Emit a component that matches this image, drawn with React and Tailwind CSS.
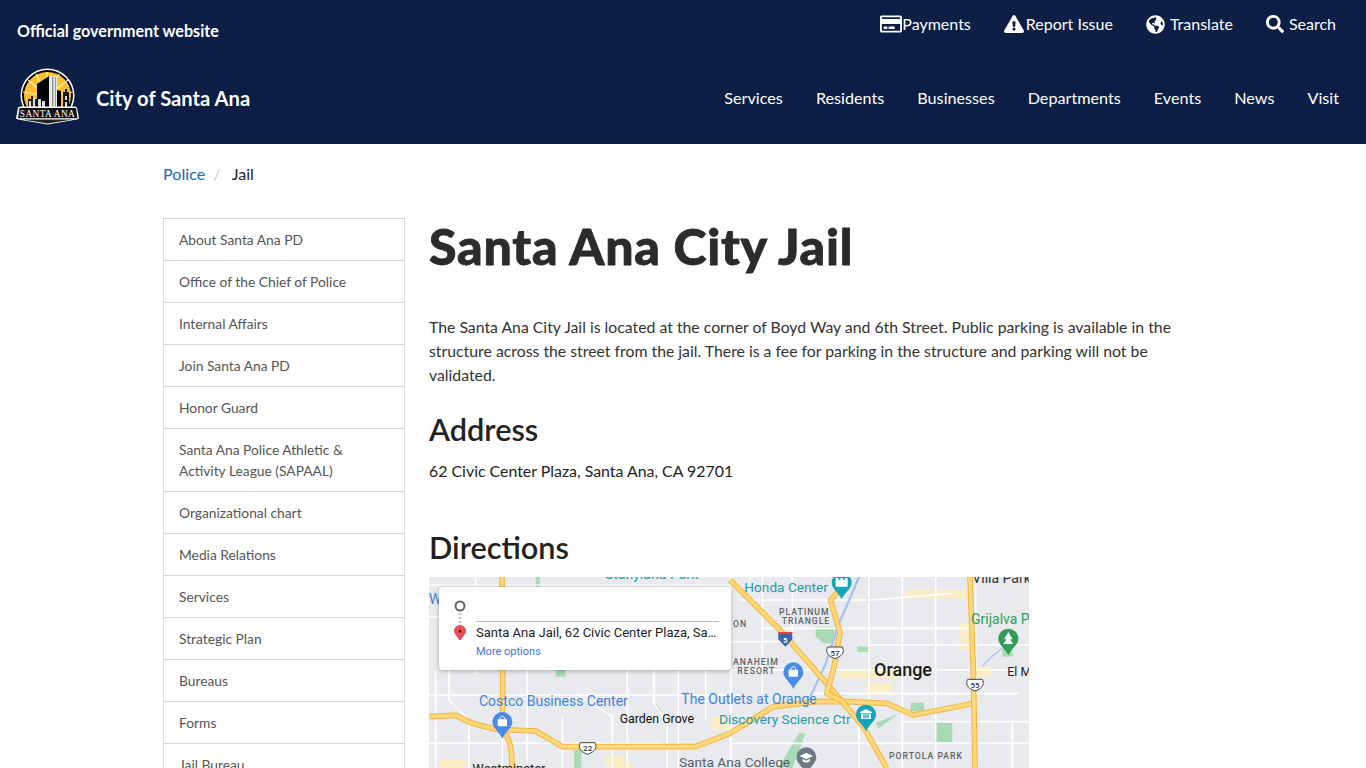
import { FaRegCreditCard, FaExclamationTriangle, FaGlobeAmericas, FaSearch } from 'react-icons/fa';

const topLinks = [
  { label: 'Payments', icon: FaRegCreditCard, size: 22, gap: 'gap-0' },
  { label: 'Report Issue', icon: FaExclamationTriangle, size: 20, gap: 'gap-[2px]' },
  { label: 'Translate', icon: FaGlobeAmericas, size: 19, gap: 'gap-[5px]' },
  { label: 'Search', icon: FaSearch, size: 18, gap: 'gap-[5px]' },
];

const mainLinks = ['Services', 'Residents', 'Businesses', 'Departments', 'Events', 'News', 'Visit'];

const sideLinks = [
  'About Santa Ana PD',
  'Office of the Chief of Police',
  'Internal Affairs',
  'Join Santa Ana PD',
  'Honor Guard',
  'Santa Ana Police Athletic & Activity League (SAPAAL)',
  'Organizational chart',
  'Media Relations',
  'Services',
  'Strategic Plan',
  'Bureaus',
  'Forms',
  'Jail Bureau',
];

const Logo = () => (
  <svg width="64" height="58" viewBox="0 0 64 58" className="shrink-0">
    <circle cx="31.500" cy="27.500" r="27" fill="#fff" />
    <circle cx="31.500" cy="27.500" r="25.500" fill="#000" />
    <circle cx="31.500" cy="27.500" r="23.500" fill="#fdc12e" />
    <g stroke="#fff3c4" strokeWidth="1.200">
      <path d="M31 28L12 12M31 28L7 24M31 28L20 6M31 28L43 6M31 28L52 12M31 28L57 24M31 28L31 4" />
    </g>
    <path d="M21 40V16l12-8v32z" fill="#000" />
    <path d="M33 8h8v32h-8z" fill="#e8e8e8" />
    <path d="M36 9h1.500v31H36zM39 9h1v31h-1z" fill="#999" />
    <path d="M41 22l4 1v17h-4z" fill="#000" />
    <path d="M47 40V24h2v-3h2v3h2v16z" fill="#111" />
    <path d="M12 40v-9h3v-3h2v3h4v9z" fill="#222" />
    <path d="M13 33h2v7h-2zM17 30h2v10h-2zM22 31h3v9h-3zM26 33h3v7h-3zM49 28h2v4h-2zM49 34h2v6h-2z" fill="#ddd" />
    <path d="M2 39.500l2-1h55l2 1 2 11-2 1-29.500 5-29.500-5-2-1z" fill="#fff" />
    <path d="M3.500 40h56.500l1.500 10.200H2z" fill="#111" />
    <path d="M6 51.500h51l-25.500 4z" fill="#222" />
    <text x="31.500" y="49" textAnchor="middle" fontFamily="'Liberation Serif', serif" fontSize="9.300" letterSpacing="0.400" fill="#fff">SANTA ANA</text>
  </svg>
);

const Pin = ({ x, y, color, children }) => (
  <g transform={`translate(${x} ${y})`}>
    <path d="M-30 0a30 30 0 1 1 60 0c0 18-20 28-30 50-10-22-30-32-30-50z" fill={color} />
    {children}
  </g>
);

const Shield = ({ x, y, label }) => (
  <g transform={`translate(${x} ${y})`}>
    <path d="M-22-17h44c6 12 4 26-22 35-26-9-28-23-22-35z" fill="#fff" stroke="#444" strokeWidth="3" />
    <text y="9" textAnchor="middle" fontSize="24" fill="#333" fontWeight="500">{label}</text>
  </g>
);

const Highway = ({ d }) => (
  <>
    <path d={d} fill="none" stroke="#f2b544" strokeWidth="17" strokeLinejoin="round" />
    <path d={d} fill="none" stroke="#fdd878" strokeWidth="11" strokeLinejoin="round" />
  </>
);

const bagIcon = (
  <>
    <path d="M-14-8h28v18a3 3 0 0 1-3 3h-22a3 3 0 0 1-3-3z" fill="#fff" />
    <path d="M-7-8c0-12 14-12 14 0" fill="none" stroke="#fff" strokeWidth="3" />
  </>
);

const museumIcon = (
  <>
    <path d="M0-17l18 9v3h-36v-3z" fill="#fff" />
    <path d="M-15-3h30v16h-30z" fill="#fff" />
    <path d="M-8-1h4v12h-4zM-2-1h4v12h-4zM4-1h4v12h-4z" fill="#14a6b8" />
  </>
);

// street map, drawn at 3x so the coordinates come straight from the crops
const MapDrawing = () => (
  <svg width="600" height="191" viewBox="0 21 1800 573" className="block" fontFamily="Roboto, sans-serif">
    <rect x="0" y="21" width="1800" height="573" fill="#e8eaed" />
    <g fill="#fbeec6">
      <path d="M30 570h80v24H30zM525 555h50l45 39h-85zM850 440h50v40h-50zM1230 300h180v25h-180zM1430 60h190v25h-190zM1590 160h30v80h-30zM1310 340h80v35h-80zM1620 290h70v30h-70z" />
    </g>
    <g fill="#a8dab5">
      <path d="M435 540h22v54h-22zM380 300h30v20h-30zM1160 170h55v50h-30l-25-20zM1285 230h35v16h-35zM1518 458h52v58h-52zM1445 398h40v25h-40zM1720 210h30v50h-30zM680 400l20 25-15 0z" />
      <path d="M1050 590l60-100 20 0-40 104zM1340 460l70-30-60 45z" />
      <path d="M320 21h12v30h-12z" />
    </g>
    <g fill="none" stroke="#fff" strokeWidth="5">
      <path d="M0 45h920M0 140h420M0 375h930M0 520h700M60 290v100l60 60v144M20 300v294M140 21v294M220 21v590M295 300v294M400 440v154M440 370l110 70v154M595 300v294M675 300v100l40 60v134M748 300v294M830 300v150M905 21v573" />
      <path d="M930 90h400l240-20M1000 175h620M1320 225h500M1120 300h700M1150 370h620M1320 21v390M1420 21v573M1520 21v573M1640 21v573M900 520h900M1170 450h120v144M1750 450v144M1420 455h380" />
      <path d="M905 215h160M905 300h200M1000 21v350M1090 21v180" />
    </g>
    <path d="M1290 21l-60 140-40 120-60 130" fill="none" stroke="#a6c3f2" strokeWidth="7" />
    <path d="M1660 290c30-40 70-60 110-90" fill="none" stroke="#a6c3f2" strokeWidth="4" />
    <Highway d="M219 21v30M221 300v130" />
    <Highway d="M0 440L80 436L130 460L200 478L320 483L400 530L800 530L903 490L1033 410L1163 395L1253 395L1373 400L1453 435L1583 410L1633 400" />
    <Highway d="M903 30L1053 180L1193 340L1303 470L1373 594" />
    <Highway d="M1240 50L1205 90L1233 190L1213 300L1193 370L1243 395" />
    <Highway d="M1623 21L1633 300L1638 594" />
    <Highway d="M229 490c12 18 20 40 20 104" />
    <g fontSize="42">
      <text x="150" y="408" fill="#4285d6">Costco Business Center</text>
      <text x="757" y="403" fill="#4285d6">The Outlets at Orange</text>
      <text x="870" y="462" fill="#1f9aa8" fontSize="41">Discovery Science Ctr</text>
      <text x="528" y="26" fill="#1f9aa8">Stanyland Park</text>
      <text x="946" y="65" fill="#1f9aa8" fontSize="41">Honda Center</text>
      <text x="0" y="102" fill="#4285d6">W</text>
      <text x="1626" y="162" fill="#2e9e5b">Grijalva P</text>
      <text x="1630" y="40" fill="#333">Villa Park</text>
      <text x="750" y="590" fill="#55606b" fontSize="41">Santa Ana College</text>
      <text x="572" y="458" fill="#111" fontSize="37">Garden Grove</text>
      <text x="1735" y="318" fill="#222" fontSize="37">El M</text>
      <text x="130" y="608" fill="#222" fontSize="39">Westminster</text>
      <text x="1335" y="317" fill="#1a1a1a" fontSize="54" fontWeight="500">Orange</text>
    </g>
    <g fontSize="26" fill="#5f6368" letterSpacing="3" fontWeight="500">
      <text x="1050" y="134">PLATINUM</text>
      <text x="1058" y="162">TRIANGLE</text>
      <text x="912" y="170">ON</text>
      <text x="912" y="285">ANAHEIM</text>
      <text x="925" y="312">RESORT</text>
      <text x="1380" y="566">PORTOLA PARK</text>
    </g>
    <Pin x={220} y={456} color="#4a8ae8">{bagIcon}</Pin>
    <Pin x={1093} y={307} color="#4a8ae8">{bagIcon}</Pin>
    <Pin x={1238} y={38} color="#14a6b8">
      <path d="M-18-14h8v5h6v-5h8v5h6v-5h8v26h-36z" fill="#fff" />
    </Pin>
    <Pin x={1311} y={434} color="#14a6b8">{museumIcon}</Pin>
    <Pin x={1738} y={206} color="#2f9e58">
      <path d="M0-20l13 22h-8l10 14h-30l10-14h-8z" fill="#fff" />
    </Pin>
    <Pin x={1132} y={562} color="#6d7a85">
      <path d="M-20-4l20-10 20 10-20 10z" fill="#fff" />
      <path d="M-11 4v8c6 5 16 5 22 0v-8l-11 6z" fill="#fff" />
    </Pin>
    <path d="M1048 190h42v18l-21 22-21-22z" fill="#3a65ab" />
    <path d="M1048 186h42v6h-42z" fill="#d94a3d" />
    <text x="1069" y="218" textAnchor="middle" fontSize="22" fill="#fff" fontWeight="700">5</text>
    <Shield x={1218} y={248} label="57" />
    <Shield x={1638} y={345} label="55" />
    <Shield x={476} y={535} label="22" />
  </svg>
);

export default function App() {
  return (
    <div className="h-[768px] overflow-hidden bg-white font-[Lato,sans-serif] text-base text-[#212529]">
      <header className="h-36 bg-[#0c1e45] text-white">
        <div className="flex h-[61px] items-start justify-between pl-[17px] pr-[30px]">
          <div className="pt-[21px] text-[16.100px] leading-5 font-bold">Official government website</div>
          <div className="flex gap-[33px] pt-[14px]">
            {topLinks.map(({ label, icon: Icon, size, gap }) => (
              <a key={label} className={`flex h-5 items-center ${gap}`}>
                <Icon size={size} />
                <span>{label}</span>
              </a>
            ))}
          </div>
        </div>
        <div className="flex h-[72px] items-center justify-between pl-[16px] pr-[27px]">
          <div className="flex items-center gap-4">
            <Logo />
            <span className="relative top-px text-[20.200px] font-bold">City of Santa Ana</span>
          </div>
          <nav className="relative top-px flex gap-[33px] text-[16.200px]">
            {mainLinks.map((link) => (
              <a key={link}>{link}</a>
            ))}
          </nav>
        </div>
      </header>

      <div className="ml-[163px] flex h-[74px] items-start pt-[18px] text-[16.200px] leading-6">
        <a className="text-[#1a6bb0]">Police</a>
        <span className="mx-2 text-[#c8ccd0]">/</span>
        <span className="ml-[3px] text-[#212529]">Jail</span>
      </div>

      <div className="ml-[163px] flex gap-6">
        <aside className="w-[242px] shrink-0 self-start border border-[#d9d9d9]">
          {sideLinks.map((link, i) => (
            <a
              key={link}
              className={`block px-[15px] py-2.5 text-[13.800px] leading-[21px] text-[#555] ${i > 0 ? 'border-t border-[#d9d9d9]' : ''}`}
            >
              {link}
            </a>
          ))}
        </aside>

        <main className="w-[774px]">
          <h1 className="-mt-px text-[50px] leading-[58px] font-black tracking-[0.8px] text-[#2b2b2b] [-webkit-text-stroke:0.8px_#2b2b2b]">Santa Ana City Jail</h1>
          <p className="mt-[40px] text-[15.800px] leading-6 text-[#333]">
            The Santa Ana City Jail is located at the corner of Boyd Way and 6th Street. Public parking is available in the structure across the street from the jail. There is a fee for parking in the structure and parking will not be validated.
          </p>
          <h2 className="mt-[25px] text-[30.700px] leading-9 font-semibold text-[#222]">Address</h2>
          <p className="mt-[11px] text-[15.900px] leading-6 text-[#222]">62 Civic Center Plaza, Santa Ana, CA 92701</p>
          <h2 className="mt-[47px] text-[30.700px] leading-9 font-semibold text-[#222]">Directions</h2>
          <div className="relative mt-[11px] w-[600px]">
            <MapDrawing />
            <div className="absolute top-2.5 left-2.5 h-[83px] w-[292px] rounded-sm bg-white shadow-[0_1px_4px_rgba(0,0,0,0.3)]">
              <svg width="20" height="44" viewBox="0 0 20 44" className="absolute top-[9px] left-[11px]">
                <circle cx="10" cy="10" r="4.500" fill="none" stroke="#5f6368" strokeWidth="2" />
                <path d="M10 17v10" stroke="#c4c7cc" strokeWidth="3" strokeDasharray="2 2" />
                <path d="M10 29a6 6 0 0 1 6 6c0 3-4 6-6 11-2-5-6-8-6-11a6 6 0 0 1 6-6z" fill="#ea4c55" />
                <circle cx="10" cy="35" r="1.500" fill="#7a1a20" />
              </svg>
              <div className="absolute top-[34px] right-3 left-[37px] border-t border-[#bdbdbd]" />
              <div className="absolute top-[36px] left-[37px] w-[243px] truncate font-[Roboto,sans-serif] text-[13px] leading-5 text-[#222]">
                Santa Ana Jail, 62 Civic Center Plaza, Santa Ana, CA 92701
              </div>
              <div className="absolute top-[57px] left-[37px] font-[Roboto,sans-serif] text-[11px] leading-4 text-[#4a72d4]">More options</div>
            </div>
          </div>
        </main>
      </div>
    </div>
  );
}
